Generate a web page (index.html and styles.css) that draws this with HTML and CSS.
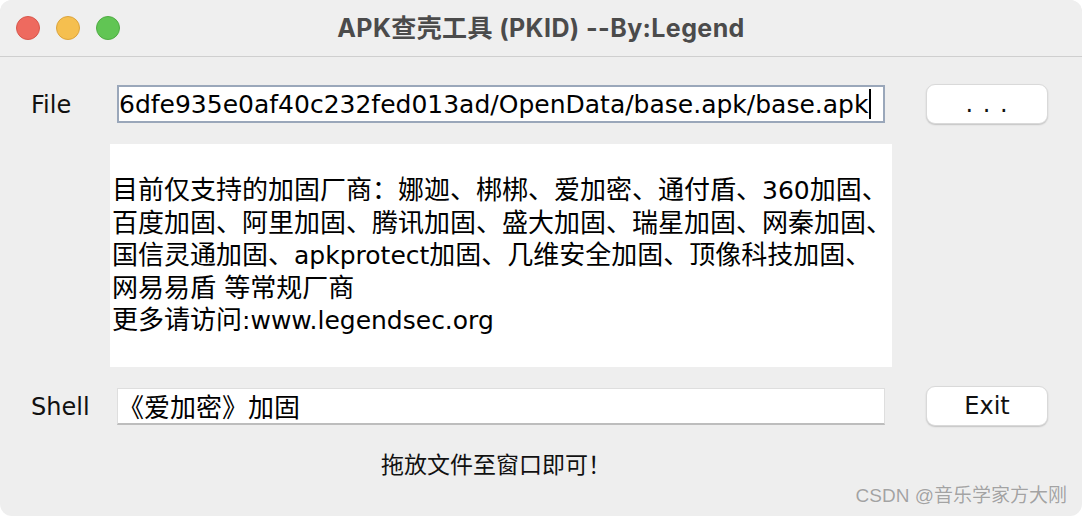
FILE: index.html
```html
<!DOCTYPE html>
<html lang="zh-CN">
<head>
<meta charset="utf-8">
<title>APK查壳工具 (PKID) --By:Legend</title>
<link rel="stylesheet" href="styles.css">
</head>
<body>
<div class="window">
  <header class="titlebar">
    <div class="lights">
      <span class="light red"></span>
      <span class="light yellow"></span>
      <span class="light green"></span>
    </div>
    <div class="title">APK查壳工具 (PKID) --By:Legend</div>
    <div></div>
  </header>
  <main class="content">
    <div class="row">
      <label class="label">File</label>
      <div class="field field-focus"><span class="value">6dfe935e0af40c232fed013ad/OpenData/base.apk/base.apk</span><span class="caret"></span></div>
      <button class="btn dots">. . .</button>
    </div>
    <div class="panel">
      <div class="panel-text">目前仅支持的加固厂商：娜迦、梆梆、爱加密、通付盾、<span class="lat">360</span>加固、<br>百度加固、阿里加固、腾讯加固、盛大加固、瑞星加固、网秦加固、<br>国信灵通加固、<span class="lat">apkprotect</span>加固、几维安全加固、顶像科技加固、<br>网易易盾 等常规厂商<br>更多请访问<span class="lat">:www.legendsec.org</span></div>
    </div>
    <div class="row row-shell">
      <label class="label">Shell</label>
      <div class="field field-plain"><span class="value cjk">《爱加密》加固</span></div>
      <button class="btn">Exit</button>
    </div>
    <div class="hint">拖放文件至窗口即可！</div>
  </main>
  <div class="watermark">CSDN @音乐学家方大刚</div>
</div>
</body>
</html>
```

FILE: styles.css
```css
html, body {
  margin: 0;
  padding: 0;
  background: #ffffff;
}

.window {
  position: relative;
  width: 1082px;
  height: 516px;
  box-sizing: border-box;
  background: #eeeeee;
  border-radius: 12px;
  overflow: hidden;
  font-family: "DejaVu Sans", "Noto Sans CJK SC", sans-serif;
  color: #111111;
}

.titlebar {
  height: 56px;
  border-bottom: 1px solid #cfcfcf;
  background: #efefef;
  display: grid;
  grid-template-columns: 1fr auto 1fr;
  align-items: center;
}

.lights {
  display: flex;
  gap: 16px;
  padding-left: 16px;
}

.light {
  width: 24px;
  height: 24px;
  border-radius: 50%;
  box-sizing: border-box;
}

.light.red { background: #ee6a5f; border: 1px solid #d8574c; }
.light.yellow { background: #f5bf4f; border: 1px solid #dca43c; }
.light.green { background: #61c554; border: 1px solid #4fac43; }

.title {
  font-family: "Inter", "Noto Sans CJK SC", sans-serif;
  font-weight: 700;
  font-size: 25px;
  letter-spacing: 0.4px;
  color: #4b4b4b;
  padding-bottom: 4px;
}

.content {
  padding: 27px 0 0 31px;
  display: flex;
  flex-direction: column;
}

.row {
  display: flex;
  align-items: center;
  height: 40px;
}

.label {
  width: 86px;
  font-size: 24px;
  color: #111111;
  padding-top: 2px;
}

.field {
  width: 768px;
  height: 38px;
  box-sizing: border-box;
  background: #ffffff;
  display: flex;
  align-items: center;
  overflow: hidden;
  white-space: nowrap;
}

.field-focus {
  border: 2px solid #9aa7ba;
  font-size: 25px;
}

.field-plain {
  border: 1px solid #dedede;
  border-bottom: 2px solid #bdbdbd;
  height: 37px;
  font-size: 26px;
}

.value {
  color: #000000;
}

.caret {
  display: inline-block;
  width: 2px;
  height: 30px;
  background: #000000;
  margin-left: 1px;
}

.btn {
  margin-left: 41px;
  width: 122px;
  height: 40px;
  box-sizing: border-box;
  background: #ffffff;
  border: 1px solid #d9d9d9;
  border-radius: 9px;
  box-shadow: 0 1px 1.5px rgba(0, 0, 0, 0.18);
  font-family: "DejaVu Sans", "Noto Sans CJK SC", sans-serif;
  font-size: 24px;
  color: #111111;
  padding: 0;
}

.btn.dots {
  letter-spacing: 1px;
}

.panel {
  margin: 20px 0 0 79px;
  width: 782px;
  height: 223px;
  background: #ffffff;
  display: flex;
  align-items: center;
  padding-left: 2px;
  box-sizing: border-box;
}

.panel-text {
  font-size: 26px;
  line-height: 32px;
  white-space: nowrap;
  color: #000000;
}

.lat {
  font-size: 25px;
}

.row-shell {
  margin-top: 19px;
}

.hint {
  margin: 25px 0 0 350px;
  font-family: "Noto Sans CJK SC", sans-serif;
  font-size: 23px;
  line-height: 24px;
  color: #111111;
}

.watermark {
  position: absolute;
  right: 15px;
  bottom: 9px;
  font-family: "Liberation Sans", "Noto Sans CJK SC", sans-serif;
  font-size: 19px;
  color: #a3a3a3;
  text-shadow: 0 0 1px #ffffff;
}
```
